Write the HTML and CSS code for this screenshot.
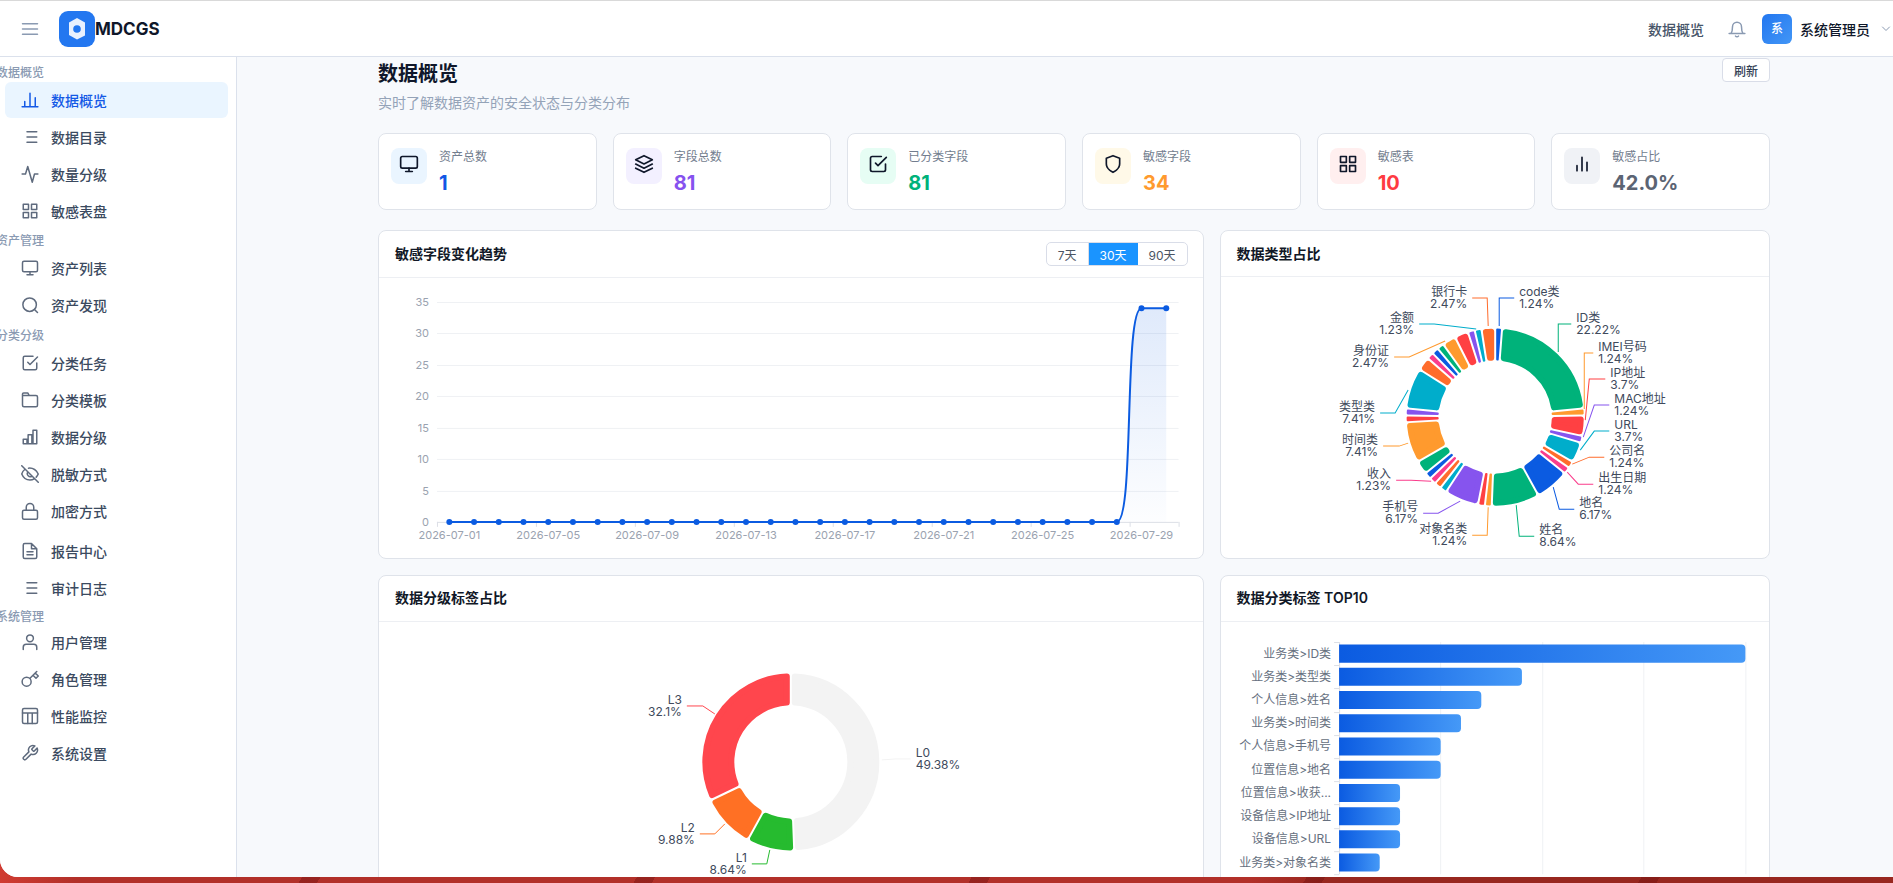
FILE: index.html
```html
<!DOCTYPE html>
<html lang="zh-CN">
<head>
<meta charset="utf-8">
<title>MDCGS 数据概览</title>
<link rel="stylesheet" href="styles.css">
</head>
<body>
<svg class="sprite" aria-hidden="true">
  <symbol id="i-monitor" viewBox="0 0 24 24"><rect x="2" y="3" width="20" height="14" rx="2"/><path d="M8 21h8M12 17v4"/></symbol>
  <symbol id="i-grid" viewBox="0 0 24 24"><path d="M3 3h7v7H3zM14 3h7v7h-7zM14 14h7v7h-7zM3 14h7v7H3z"/></symbol>
  <symbol id="i-check" viewBox="0 0 24 24"><path d="M9 11l3 3L22 4"/><path d="M21 12v7a2 2 0 0 1-2 2H5a2 2 0 0 1-2-2V5a2 2 0 0 1 2-2h11"/></symbol>
  <symbol id="i-list" viewBox="0 0 24 24"><path d="M8 5h13M8 12h13M8 19h13"/></symbol>
  <symbol id="i-bars" viewBox="0 0 24 24"><path d="M18 20V10M12 20V4M6 20v-6"/></symbol>
</svg>
<div class="app">
  <header class="topbar">
    <div class="topbar-left">
      <button class="icon-btn" type="button" aria-label="菜单"><svg class="icon" viewBox="0 0 24 24"><path d="M2 5h20M2 12h20M2 19h20"/></svg></button>
      <a class="brand" href="#">
        <svg class="logo" viewBox="0 0 36 36"><rect width="36" height="36" rx="9" fill="#2377f0"/><path d="M18 7l8 4.500v13L18 28.500l-8-4.500V11.500z" fill="#e9f1fe"/><circle cx="18" cy="18" r="3.800" fill="#2377f0"/></svg>
        <span>MDCGS</span>
      </a>
    </div>
    <div class="topbar-right">
      <a class="crumb" href="#">数据概览</a>
      <button class="icon-btn" type="button" aria-label="通知"><svg class="icon" viewBox="0 0 24 24"><path d="M1.500 18h21M4 18c1.500-2 2-4 2-9a6 6 0 0 1 12 0c0 5 .5 7 2 9M10 21.500c1 1.200 3 1.200 4 0"/></svg></button>
      <button class="user" type="button"><span class="avatar">系</span><span>系统管理员</span><svg class="chevron" viewBox="0 0 24 24"><path d="M5 8l7 7 7-7"/></svg></button>
    </div>
  </header>
  <div class="body">
    <nav class="sidebar">
      <section class="nav-section">
        <h2>数据概览</h2>
        <a class="nav-item active" href="#"><svg class="icon" viewBox="0 0 24 24"><path d="M1.500 21h21M5 20v-6M12 20V3M19 20V9"/></svg>数据概览</a>
        <a class="nav-item" href="#"><svg class="icon"><use href="#i-list"/></svg>数据目录</a>
        <a class="nav-item" href="#"><svg class="icon" viewBox="0 0 24 24"><path d="M1.500 12H6L9 2l6 21 3-11h4.500"/></svg>数量分级</a>
        <a class="nav-item" href="#"><svg class="icon"><use href="#i-grid"/></svg>敏感表盘</a>
      </section>
      <section class="nav-section">
        <h2>资产管理</h2>
        <a class="nav-item" href="#"><svg class="icon"><use href="#i-monitor"/></svg>资产列表</a>
        <a class="nav-item" href="#"><svg class="icon" viewBox="0 0 24 24"><circle cx="11.500" cy="11.500" r="9"/><path d="M18 18l4 4"/></svg>资产发现</a>
      </section>
      <section class="nav-section classify">
        <h2>分类分级</h2>
        <a class="nav-item" href="#"><svg class="icon"><use href="#i-check"/></svg>分类任务</a>
        <a class="nav-item" href="#"><svg class="icon" viewBox="0 0 24 24"><path d="M2 6v13a2 2 0 0 0 2 2h16a2 2 0 0 0 2-2V8a2 2 0 0 0-2-2zM2 7V4a1.500 1.500 0 0 1 1.500-1.500H9L11 6"/></svg>分类模板</a>
        <a class="nav-item" href="#"><svg class="icon" viewBox="0 0 24 24"><path d="M3 15h5v6H3zM9.500 9h5v12h-5zM16 3h5v18h-5z"/></svg>数据分级</a>
        <a class="nav-item" href="#"><svg class="icon" viewBox="0 0 24 24"><path d="M1 1l22 22M5 6C3 7.500 1.500 10 1 12c2 5 6 8 11 8 2 0 4-.5 5.500-1.500M10 4.200c6-.6 10.500 3 13 7.800-.7 1.700-1.500 3-2.700 4.200M9 9.500a4 4 0 0 0 5.500 5.500"/></svg>脱敏方式</a>
        <a class="nav-item" href="#"><svg class="icon" viewBox="0 0 24 24"><rect x="2" y="11" width="20" height="12" rx="2"/><path d="M7 11V7a5 5 0 0 1 10 0v4"/></svg>加密方式</a>
      </section>
      <section class="nav-section reports">
        <a class="nav-item" href="#"><svg class="icon" viewBox="0 0 24 24"><path d="M14 2H5a2 2 0 0 0-2 2v16a2 2 0 0 0 2 2h14a2 2 0 0 0 2-2V9zM14 2v7h7M8 13h8M8 17h8"/></svg>报告中心</a>
        <a class="nav-item" href="#"><svg class="icon"><use href="#i-list"/></svg>审计日志</a>
      </section>
      <section class="nav-section system">
        <h2>系统管理</h2>
        <a class="nav-item" href="#"><svg class="icon" viewBox="0 0 24 24"><circle cx="12" cy="7" r="4.500"/><path d="M3 22v-3a4 4 0 0 1 4-4h10a4 4 0 0 1 4 4v3"/></svg>用户管理</a>
        <a class="nav-item" href="#"><svg class="icon" viewBox="0 0 24 24"><circle cx="7.500" cy="15.500" r="6"/><path d="M12 11L21 2M16 7l4 4 3-3-4-4"/></svg>角色管理</a>
        <a class="nav-item" href="#"><svg class="icon" viewBox="0 0 24 24"><rect x="2" y="2" width="20" height="20" rx="2"/><path d="M2 8h20M9 8v14M15 8v14"/></svg>性能监控</a>
        <a class="nav-item" href="#"><svg class="icon" viewBox="0 0 24 24"><path d="M14.700 6.300a1 1 0 0 0 0 1.400l1.600 1.600a1 1 0 0 0 1.400 0l3.770-3.770a6 6 0 0 1-7.940 7.940l-6.910 6.910a2.120 2.120 0 0 1-3-3l6.910-6.910a6 6 0 0 1 7.940-7.940z"/></svg>系统设置</a>
      </section>
    </nav>
    <main class="content">
      <div class="page-head">
        <div>
          <h1>数据概览</h1>
          <p>实时了解数据资产的安全状态与分类分布</p>
        </div>
        <button class="refresh" type="button">刷新</button>
      </div>
      <div class="stats">
        <div class="stat blue"><span class="stat-icon"><svg class="icon"><use href="#i-monitor"/></svg></span><div><div class="stat-label">资产总数</div><div class="stat-value">1</div></div></div>
        <div class="stat purple"><span class="stat-icon"><svg class="icon" viewBox="0 0 24 24"><path d="M12 2L2 7l10 5 10-5zM2 12l10 5 10-5M2 17l10 5 10-5"/></svg></span><div><div class="stat-label">字段总数</div><div class="stat-value">81</div></div></div>
        <div class="stat green"><span class="stat-icon"><svg class="icon"><use href="#i-check"/></svg></span><div><div class="stat-label">已分类字段</div><div class="stat-value">81</div></div></div>
        <div class="stat orange"><span class="stat-icon"><svg class="icon" viewBox="0 0 24 24"><path d="M12 22s8-4 8-10V5l-8-3-8 3v7c0 6 8 10 8 10z"/></svg></span><div><div class="stat-label">敏感字段</div><div class="stat-value">34</div></div></div>
        <div class="stat red"><span class="stat-icon"><svg class="icon"><use href="#i-grid"/></svg></span><div><div class="stat-label">敏感表</div><div class="stat-value">10</div></div></div>
        <div class="stat gray"><span class="stat-icon"><svg class="icon"><use href="#i-bars"/></svg></span><div><div class="stat-label">敏感占比</div><div class="stat-value">42.0%</div></div></div>
      </div>
      <div class="panels">
        <section class="panel">
          <div class="panel-head"><h3>敏感字段变化趋势</h3>
            <div class="segmented"><button type="button">7天</button><button type="button" class="on">30天</button><button type="button">90天</button></div>
          </div>
          <svg class="chart" id="trend" viewBox="0 0 824 280"></svg>
        </section>
        <section class="panel">
          <div class="panel-head"><h3>数据类型占比</h3></div>
          <svg class="chart" id="types" viewBox="0 0 548 280"></svg>
        </section>
        <section class="panel">
          <div class="panel-head"><h3>数据分级标签占比</h3></div>
          <svg class="chart" id="levels" viewBox="0 0 824 280"></svg>
        </section>
        <section class="panel">
          <div class="panel-head"><h3>数据分类标签 TOP10</h3></div>
          <svg class="chart" id="top10" viewBox="0 0 548 280"></svg>
        </section>
      </div>
    </main>
  </div>
</div>
<script src="charts.js"></script>
</body>
</html>
```
FILE: styles.css
```css
* { box-sizing: border-box; }
html, body { height: 100%; }
body {
  margin: 0;
  padding-bottom: 6px;
  overflow: hidden;
  font-family: Inter, "Noto Sans CJK SC", sans-serif;
  font-size: 14px;
  color: #334155;
  background:
    repeating-linear-gradient(120deg, transparent 0 120px, rgba(110, 15, 15, .4) 120px 136px, transparent 136px 290px),
    linear-gradient(90deg, #d03c32 0, #b23029 4%, #b23029 66%, #98271f 70%);
}
h1, h2, h3, p { margin: 0; }
a { color: inherit; text-decoration: none; }
button { font: inherit; color: inherit; padding: 0; border: 0; background: none; cursor: pointer; }
.sprite { display: none; }
.icon, .chevron { flex: none; width: 18px; height: 18px; fill: none; stroke: currentColor; stroke-width: 2; stroke-linecap: round; stroke-linejoin: round; }

.app {
  height: 100%;
  display: flex;
  flex-direction: column;
  overflow: hidden;
  background: #f7f9fc;
  border-top: 1px solid #d9d9d9;
  border-bottom-left-radius: 18px;
}
.topbar {
  flex: none;
  height: 56px;
  display: flex;
  align-items: center;
  justify-content: space-between;
  padding: 0 0 0 21px;
  background: #fff;
  border-bottom: 1px solid #dbe1ec;
}
.topbar-left, .topbar-right, .brand, .user { display: flex; align-items: center; }
.topbar-left { gap: 20px; }
.icon-btn { display: flex; color: #8a9ab2; }
.brand { font-size: 17px; font-weight: 700; color: #0f172a; }
.logo { width: 36px; height: 36px; }
.topbar-right { gap: 16px; }
.crumb { margin-right: 8px; font-weight: 500; color: #475569; }
.user { gap: 8px; font-weight: 500; color: #0f172a; }
.avatar {
  width: 30px;
  height: 30px;
  border-radius: 6px;
  font-size: 12px;
  line-height: 30px;
  text-align: center;
  color: #fff;
  background: linear-gradient(135deg, #2377f0, #4296f6);
}
.chevron { width: 12px; height: 12px; margin-left: 2px; margin-right: 1px; color: #8a9ab2; }

.body { flex: 1; min-height: 0; display: flex; }
.sidebar {
  flex: none;
  width: 237px;
  padding: 5px 8px 0 5px;
  overflow: hidden;
  background: #fff;
  border-right: 1px solid #dbe1ec;
}
.nav-section { display: flex; flex-direction: column; gap: 1px; margin-bottom: 1px; }
.nav-section h2 {
  margin: 0 0 -1px -9px;
  padding-top: 2px;
  font-size: 12px;
  font-weight: 500;
  line-height: 18px;
  color: #8a9ab2;
}
.classify { padding-top: 1px; }
.reports { padding-top: 3px; }
.system h2 { line-height: 15px; }
.nav-item {
  height: 36px;
  display: flex;
  align-items: center;
  gap: 12px;
  padding-left: 16px;
  border-radius: 6px;
  font-weight: 500;
  color: #3b4a60;
}
.nav-item .icon { color: #5f6b7e; }
.nav-item.active, .nav-item.active .icon { color: #1459e6; }
.nav-item.active { background: #eaf5ff; }

.content { flex: 1; min-width: 0; padding: 1px 123px 0 141px; }
.page-head { display: flex; justify-content: space-between; align-items: flex-start; margin-bottom: 20px; }
.page-head h1 { font-size: 20px; line-height: 32px; font-weight: 600; color: #0f172a; }
.page-head p { margin-top: 3px; line-height: 20px; color: #94a3b8; }
.refresh { width: 48px; height: 24px; font-size: 12px; font-weight: 500; border: 1px solid #d9dde8; border-radius: 4px; background: #fff; }

.stats { display: grid; grid-template-columns: repeat(6, 1fr); gap: 16px; margin-bottom: 20px; }
.stat { display: flex; gap: 12px; padding: 14px 12px 12px; background: #fff; border: 1px solid #dfe3ea; border-radius: 8px; }
.stat-icon { width: 36px; height: 36px; padding-bottom: 4px; display: flex; align-items: center; justify-content: center; border-radius: 8px; color: #0f172a; }
.stat-icon .icon { width: 20px; height: 20px; }
.stat-label { font-size: 12px; line-height: 18px; color: #727d8e; }
.stat-value { margin-top: 3px; font-size: 20px; font-weight: 700; line-height: 28px; }
.blue .stat-icon { background: #eaf5ff; }
.blue .stat-value { color: #1257e5; }
.purple .stat-icon { background: #f3f0ff; }
.purple .stat-value { color: #8652ef; }
.green .stat-icon { background: #e6fdf4; }
.green .stat-value { color: #00b27a; }
.orange .stat-icon { background: #fff9e8; }
.orange .stat-value { color: #ff9a2e; }
.red .stat-icon { background: #ffefef; }
.red .stat-value { color: #ff3b42; }
.gray .stat-icon { background: #f0f2f6; }
.gray .stat-value { color: #5b6473; }

.panels { display: grid; grid-template-columns: 3fr 2fr; gap: 16px; }
.panel { min-width: 0; background: #fff; border: 1px solid #dfe3ea; border-radius: 8px; }
.panel-head { min-height: 46px; display: flex; align-items: center; justify-content: space-between; padding: 11px 15px 11px 16px; border-bottom: 1px solid #edeff3; }
.panel-head h3 { font-size: 14px; line-height: 20px; font-weight: 600; color: #111827; }
.segmented { display: flex; border: 1px solid #d9dde8; border-radius: 5px; overflow: hidden; }
.segmented button { height: 22px; padding: 0 11px; font-size: 12px; color: #4b5563; }
.segmented button:first-child { border-right: 1px solid #d9dde8; }
.segmented .on { color: #fff; background: #1a94ff; }
.chart { display: block; width: 100%; font-size: 12px; fill: #404a5c; }
.axis-text { font-size: 11px; fill: #9aa2af; }
.bar-text { fill: #667080; }
.grid-line { stroke: #eff1f4; }
.axis-line { stroke: #dcdfe6; }
.trend-line { fill: none; stroke: #0b5be1; stroke-width: 2; }
.trend-dot { fill: #0b5be1; }
.leader { fill: none; }
```
FILE: charts.js
```javascript
const NS = 'http://www.w3.org/2000/svg';

function add(parent, tag, attrs, text) {
  const el = document.createElementNS(NS, tag);
  for (const key in attrs) el.setAttribute(key, attrs[key]);
  if (text !== undefined) el.textContent = text;
  parent.appendChild(el);
  return el;
}

function gradient(svg, id, dir, from, to) {
  const g = add(svg, 'linearGradient', Object.assign({ id, x1: 0, y1: 0, x2: 0, y2: 0 }, dir));
  add(g, 'stop', Object.assign({ offset: 0 }, from));
  add(g, 'stop', Object.assign({ offset: 1 }, to));
}

function drawTrend(svg) {
  const left = 58, right = 800, top = 24, bottom = 244, days = 30;
  const step = (right - left) / days;
  for (let v = 0; v <= 35; v += 5) {
    const y = Math.round(bottom - v / 35 * (bottom - top)) + 0.5;
    add(svg, 'line', { x1: left, x2: right, y1: y, y2: y, class: v ? 'grid-line' : 'axis-line' });
    add(svg, 'text', { x: left - 8, y: y + 4, 'text-anchor': 'end', class: 'axis-text' }, v);
  }
  for (let d = 0; d < days; d += 4) {
    const x = Math.round(left + d * step) + 0.5;
    add(svg, 'line', { x1: x, x2: x, y1: bottom, y2: bottom + 5, class: 'axis-line' });
    add(svg, 'text', { x: left + (d + 0.5) * step, y: 261, 'text-anchor': 'middle', class: 'axis-text' },
      '2026-07-' + String(d + 1).padStart(2, '0'));
  }
  add(svg, 'line', { x1: right + 0.5, x2: right + 0.5, y1: bottom, y2: bottom + 5, class: 'axis-line' });
  gradient(svg, 'area', { y2: 1 }, { 'stop-color': '#0b5be1', 'stop-opacity': 0.13 }, { 'stop-color': '#0b5be1', 'stop-opacity': 0.01 });
  const px = i => left + (i + 0.5) * step;
  const high = bottom - 34 / 35 * (bottom - top);
  const rise = `C${px(27) + 18},${bottom} ${px(28) - 18},${high} ${px(28)},${high}L${px(29)},${high}`;
  add(svg, 'path', { d: `M${px(27)},${bottom}${rise}V${bottom}Z`, fill: 'url(#area)' });
  add(svg, 'path', { d: `M${px(0)},${bottom}H${px(27)}${rise}`, class: 'trend-line' });
  for (let i = 0; i < days; i++) {
    add(svg, 'circle', { cx: px(i), cy: i > 27 ? high : bottom, r: 3, class: 'trend-dot' });
  }
}

function sector(svg, cx, cy, inner, outer, a0, a1, color) {
  const gap = 1;
  const r = Math.min(3, ((a1 - a0) * inner - 2 * gap) * 0.45);
  const ri = inner + gap + r, ro = outer - gap - r;
  const pad = gap + r;
  const at = (rad, a) => `${(cx + rad * Math.sin(a)).toFixed(2)},${(cy - rad * Math.cos(a)).toFixed(2)}`;
  const big = a1 - a0 > Math.PI ? 1 : 0;
  const d = `M${at(ro, a0 + pad / ro)}A${ro},${ro} 0 ${big} 1 ${at(ro, a1 - pad / ro)}` +
    `L${at(ri, a1 - pad / ri)}A${ri},${ri} 0 ${big} 0 ${at(ri, a0 + pad / ri)}Z`;
  add(svg, 'path', { d, fill: color, stroke: color, 'stroke-width': 2 * r, 'stroke-linejoin': 'round' });
}

function drawDonut(svg, cx, cy, slices) {
  const total = slices.reduce((sum, s) => sum + s.n, 0);
  let acc = 0;
  for (const s of slices) {
    const a0 = acc / total * 2 * Math.PI;
    acc += s.n;
    sector(svg, cx, cy, 55.5, 89.5, a0, acc / total * 2 * Math.PI, s.color);
    if (!s.name) continue;
    const end = s.line[2];
    const toRight = end[0] > s.line[1][0];
    const x = end[0] + (toRight ? 5 : -5);
    const anchor = toRight ? 'start' : 'end';
    add(svg, 'polyline', { points: s.line.join(' '), stroke: s.color, class: 'leader' });
    add(svg, 'text', { x, y: end[1] - 2, 'text-anchor': anchor }, s.name);
    add(svg, 'text', { x, y: end[1] + 10, 'text-anchor': anchor }, s.pct);
  }
}

const palette = ['#0b5be1', '#00b27a', '#ff9a2e', '#ff4043', '#8654ee', '#00adcb', '#ff6c2c', '#fa3d8c'];
const types = [
  [1, 'code类', '1.24%', [[278, 49], [278, 21], [293, 21]]],
  [18, 'ID类', '22.22%', [[337, 75], [337, 47], [350, 47]]],
  [1, 'IMEI号码', '1.24%', [[363, 132], [363, 76], [372, 76]]],
  [3, 'IP地址', '3.7%', [[364, 143], [368, 102], [384, 102]]],
  [1, 'MAC地址', '1.24%', [[362, 160], [373, 128], [388, 128]]],
  [3, 'URL', '3.7%', [[359, 173], [373, 154], [388, 154]]],
  [1, '公司名', '1.24%', [[351, 187], [368, 180], [383, 180]]],
  [1, '出生日期', '1.24%', [[346, 195], [357, 207], [372, 207]]],
  [5, '地名', '6.17%', [[332, 210], [338, 232], [353, 232]]],
  [7, '姓名', '8.64%', [[295, 228], [298, 259], [313, 259]]],
  [1, '对象名类', '1.24%', [[267, 230], [266, 258], [251, 258]]],
  [1],
  [5, '手机号', '6.17%', [[239, 224], [217, 236], [202, 236]]],
  [1],
  [1],
  [1, '收入', '1.23%', [[210, 204], [190, 203], [175, 203]]],
  [1],
  [2],
  [6, '时间类', '7.41%', [[187, 166], [178, 169], [162, 169]]],
  [1],
  [1],
  [6, '类型类', '7.41%', [[187, 113], [174, 136], [159, 136]]],
  [2],
  [1],
  [1],
  [1],
  [2, '身份证', '2.47%', [[224, 64], [188, 80], [173, 80]]],
  [2],
  [1],
  [1, '金额', '1.23%', [[255, 52], [213, 47], [198, 47]]],
  [2, '银行卡', '2.47%', [[267, 49], [266, 21], [251, 21]]]
].map(([n, name, pct, line], i) => ({ n, name, pct, line, color: palette[i % palette.length] }));

const levels = [
  { n: 40, name: 'L0', pct: '49.38%', color: '#f3f3f3', line: [[503, 138], [517, 137], [532, 137]] },
  { n: 7, name: 'L1', pct: '8.64%', color: '#26bb2f', line: [[391, 228], [388, 242], [373, 242]] },
  { n: 8, name: 'L2', pct: '9.88%', color: '#ff7024', line: [[346, 202], [336, 212], [321, 212]] },
  { n: 26, name: 'L3', pct: '32.1%', color: '#ff464d', line: [[336, 92], [324, 84], [308, 84]] }
];

function drawBars(svg, rows) {
  const left = 118, right = 524, top = 20, bottom = 252, max = 20;
  const step = (bottom - top) / rows.length;
  gradient(svg, 'bar', { x2: 1 }, { 'stop-color': '#0b5be1' }, { 'stop-color': '#4599f7' });
  for (let v = 0; v <= max; v += 5) {
    const x = Math.floor(left + v / max * (right - left)) + 0.5;
    add(svg, 'line', { x1: x, x2: x, y1: top, y2: bottom, class: v ? 'grid-line' : 'axis-line' });
  }
  for (let i = 0; i <= rows.length; i++) {
    const y = Math.round(top + i * step) + 0.5;
    add(svg, 'line', { x1: left - 5, x2: left, y1: y, y2: y, class: 'axis-line' });
  }
  rows.forEach(([name, value], i) => {
    const mid = top + (i + 0.5) * step;
    const end = left + value / max * (right - left);
    add(svg, 'path', {
      d: `M${left},${mid - 9}H${end - 4}q4,0 4,4V${mid + 5}q0,4 -4,4H${left}Z`,
      fill: 'url(#bar)'
    });
    add(svg, 'text', { x: left - 8, y: mid + 4, 'text-anchor': 'end', class: 'bar-text' }, name);
  });
}

drawTrend(document.getElementById('trend'));
drawDonut(document.getElementById('types'), 274, 140, types);
drawDonut(document.getElementById('levels'), 412, 140, levels);
drawBars(document.getElementById('top10'), [
  ['业务类>ID类', 20], ['业务类>类型类', 9], ['个人信息>姓名', 7], ['业务类>时间类', 6], ['个人信息>手机号', 5],
  ['位置信息>地名', 5], ['位置信息>收获...', 3], ['设备信息>IP地址', 3], ['设备信息>URL', 3], ['业务类>对象名类', 2]
]);
```
